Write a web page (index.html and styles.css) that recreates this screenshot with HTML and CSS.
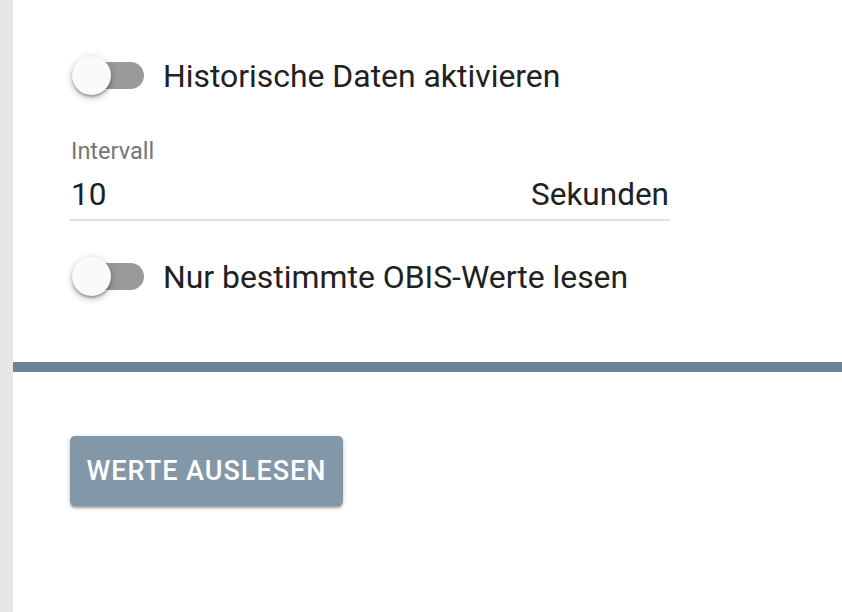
FILE: index.html
```html
<!DOCTYPE html>
<html lang="de">
<head>
<meta charset="utf-8">
<title>Einstellungen</title>
<link rel="stylesheet" href="styles.css">
</head>
<body>
<div class="page">
  <div class="sidebar"></div>
  <main class="main">
    <section class="settings">
      <div class="toggle-row">
        <span class="toggle"><span class="track"></span><span class="thumb"></span></span>
        <span class="toggle-label">Historische Daten aktivieren</span>
      </div>
      <div class="field">
        <div class="field-label">Intervall</div>
        <div class="field-input">
          <span class="value">10</span>
          <span class="suffix">Sekunden</span>
        </div>
      </div>
      <div class="toggle-row second">
        <span class="toggle"><span class="track"></span><span class="thumb"></span></span>
        <span class="toggle-label">Nur bestimmte OBIS-Werte lesen</span>
      </div>
    </section>
    <div class="divider"></div>
    <section class="actions">
      <button class="btn">WERTE AUSLESEN</button>
    </section>
  </main>
</div>
</body>
</html>
```

FILE: styles.css
```css
html, body {
  margin: 0;
  padding: 0;
  background: #ffffff;
  font-family: Roboto, "Liberation Sans", sans-serif;
  color: #212121;
}

.page {
  display: flex;
  min-height: 612px;
}

.sidebar {
  width: 13px;
  flex: 0 0 13px;
  background: #e6e6e6;
}

.main {
  flex: 1;
  display: flex;
  flex-direction: column;
}

.settings {
  padding: 55px 0 0 57px;
  display: flex;
  flex-direction: column;
}

.toggle-row {
  display: flex;
  align-items: center;
  height: 40px;
  gap: 19px;
}

.toggle-row.second {
  margin-top: 35px;
}

.toggle {
  position: relative;
  width: 74px;
  height: 40px;
  flex: 0 0 74px;
}

.track {
  position: absolute;
  left: 10px;
  top: 7px;
  width: 64px;
  height: 27px;
  border-radius: 14px;
  background: #9a9a9a;
}

.thumb {
  position: absolute;
  left: 2px;
  top: 1px;
  width: 39px;
  height: 39px;
  border-radius: 50%;
  background: #fafafa;
  box-shadow: 0 2px 2px rgba(0,0,0,0.24), 0 3px 6px rgba(0,0,0,0.18), 0 1px 8px rgba(0,0,0,0.12);
}

.toggle-label {
  font-size: 31.9px;
  line-height: 37px;
  color: #212121;
  padding-top: 2px;
}

.field {
  width: 600px;
  margin-top: 43px;
  display: flex;
  flex-direction: column;
}

.field-label {
  font-size: 23.5px;
  line-height: 27px;
  color: #757575;
  padding-left: 1px;
}

.field-input {
  margin-top: 11px;
  display: flex;
  justify-content: space-between;
  font-size: 31.5px;
  line-height: 37px;
  padding: 0 1px 6px 1px;
  border-bottom: 2px solid #e0e0e0;
  color: #212121;
}

.divider {
  margin-top: 66px;
  height: 10px;
  background: #6b8498;
}

.actions {
  padding: 64px 0 0 57px;
}

.btn {
  width: 273px;
  height: 70px;
  border: none;
  border-radius: 5px;
  background: #8297a8;
  color: #ffffff;
  font-family: Roboto, "Liberation Sans", sans-serif;
  font-size: 27px;
  font-weight: 500;
  letter-spacing: 1px;
  padding: 0;
  box-shadow: 0 3px 2px -1px rgba(0,0,0,0.2), 0 2px 3px rgba(0,0,0,0.14), 0 1px 6px rgba(0,0,0,0.12);
}
```
